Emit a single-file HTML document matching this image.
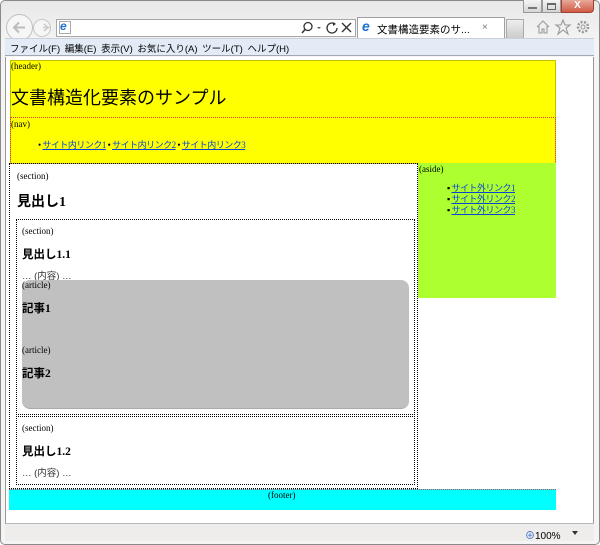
<!DOCTYPE html>
<html><head><meta charset="utf-8"><style>
*{margin:0;padding:0;box-sizing:border-box}
body{width:600px;height:545px;position:relative;overflow:hidden;background:#fff;font-family:"Liberation Serif","Noto Serif CJK SC",serif;font-size:10px;color:#000}
.a{position:absolute}
.ui{font-family:"Liberation Sans","Noto Sans CJK JP",sans-serif}
.s{font-size:9px}
h1{font-family:"Liberation Sans","Noto Sans CJK JP",sans-serif;font-weight:normal;font-size:18px}
h2{font-size:14px;font-weight:bold;font-family:"Liberation Serif","Noto Sans CJK JP",serif}
h3{font-size:11.5px;font-weight:bold;font-family:"Liberation Serif","Noto Sans CJK JP",serif}
a{color:#0645d8;text-decoration:underline}
.lnk{font-family:"Liberation Serif","Noto Sans CJK JP",serif;font-size:9px;letter-spacing:-0.5px}
</style></head><body>
<div class="a" style="left:0;top:0;width:600px;height:545px;background:linear-gradient(#e8e8e8,#f4f4f4 40px);border:1px solid #8a8a8a;border-radius:5px"></div>
<div class="a" style="left:523px;top:0;width:19px;height:13px;background:linear-gradient(#f4f4f4,#d4d4d4);border:1px solid #999;border-top:none"></div>
<div class="a" style="left:528px;top:7px;width:9px;height:2px;background:#777"></div>
<div class="a" style="left:542px;top:0;width:19px;height:13px;background:linear-gradient(#f4f4f4,#d4d4d4);border:1px solid #999;border-top:none"></div>
<div class="a" style="left:547px;top:3px;width:9px;height:7px;border:1px solid #666;border-top-width:2px"></div>
<div class="a" style="left:561px;top:0;width:33px;height:13px;background:linear-gradient(#e8a898,#d05a44);border:1px solid #a04030;border-top:none;border-radius:0 0 4px 0;color:#fff;font:bold 10px 'Liberation Sans',sans-serif;text-align:center;line-height:12px">X</div>
<div class="a" style="left:6px;top:14px;width:27px;height:27px;border-radius:50%;border:1px solid #c0c0c0;background:#f6f6f6"></div>
<div class="a" style="left:33px;top:19px;width:18px;height:18px;border-radius:50%;border:1px solid #c8c8c8;background:#f6f6f6"></div>
<svg class="a" style="left:6px;top:14px" width="46" height="27"><path d="M19 13.5H8M13 8.5L8 13.5L13 18.5" stroke="#bbb" stroke-width="2" fill="none"/><path d="M37 13.5H45" stroke="#ccc" stroke-width="1.5"/><path d="M38 10L42 13.5L38 17" stroke="#ccc" stroke-width="1.5" fill="none"/></svg>
<div class="a" style="left:56px;top:19px;width:300px;height:18px;background:#fff;border:1px solid #a8a8a8"></div>
<div class="a" style="left:59px;top:21px;width:12px;height:13px;border:1px solid #aaa;background:#fff"></div>
<div class="a ui" style="left:60px;top:19px;color:#1a73d0;font-size:12px;font-weight:bold;font-style:italic">e</div>
<svg class="a" style="left:300px;top:21px" width="55" height="14"><circle cx="8" cy="5.5" r="4" stroke="#333" stroke-width="1.3" fill="none"/><path d="M5 8.5L2 12" stroke="#333" stroke-width="1.5"/><path d="M17 6l2 2 2-2z" fill="#555"/><path d="M35 3A5 5 0 1 0 37 7" stroke="#333" stroke-width="1.3" fill="none"/><path d="M33 1l3 2-3 2z" fill="#333"/><path d="M42 2l9 9M51 2l-9 9" stroke="#333" stroke-width="1.4"/></svg>
<div class="a" style="left:357px;top:17px;width:148px;height:21px;background:#fff;border:1px solid #a0a0a0;border-bottom:none"></div>
<div class="a ui" style="left:362px;top:18px;color:#1a73d0;font-size:14px;font-weight:bold;font-style:italic">e</div>
<div class="a ui" style="left:377px;top:22px;font-size:10.5px;white-space:nowrap">文書構造要素のサ...</div>
<div class="a ui" style="left:482px;top:22px;font-size:10px;color:#777">×</div>
<div class="a" style="left:506px;top:19px;width:18px;height:19px;background:linear-gradient(#eee,#ccc);border:1px solid #aaa;border-bottom:none"></div>
<svg class="a" style="left:535px;top:18px" width="58" height="18"><path d="M2 9L8 3L14 9M4 8v7h3v-4h2v4h3V8" stroke="#999" stroke-width="1.1" fill="none"/><path d="M28 2l2 5h5l-4 3 2 6-5-4-5 4 2-6-4-3h5z" stroke="#999" stroke-width="1.1" fill="none"/><circle cx="48" cy="9" r="5" stroke="#999" stroke-width="2.5" fill="none" stroke-dasharray="2 1.5"/><circle cx="48" cy="9" r="2" stroke="#999" fill="none"/></svg>
<div class="a" style="left:5px;top:38px;width:589px;height:18px;background:#e2ebf6;border-bottom:1px solid #a0a8b0;border-top:1px solid #c8d0d8"></div>
<div class="a ui" style="left:10px;top:41px;font-size:9.5px;white-space:nowrap;word-spacing:2px">ファイル(F) 編集(E) 表示(V) お気に入り(A) ツール(T) ヘルプ(H)</div>
<div class="a" style="left:5px;top:57px;width:589px;height:467px;background:#fff;border-left:1px solid #999;border-right:1px solid #999"></div>
<div class="a" style="left:5px;top:523px;width:589px;height:18px;background:#efedeb;border-top:1px solid #b8b8b8"></div>
<div class="a ui" style="left:525px;top:527px;font-size:10px"><span style="color:#2a6ac8">⊕</span>100%</div>
<div class="a" style="left:572px;top:531px;border:3px solid transparent;border-top:4px solid #333"></div>

<div class="a" style="left:10px;top:60px;width:546px;height:104px;background:#ff0;border:1px solid #c0c000"></div>
<div class="a s" style="left:11px;top:61px">(header)</div>
<h1 class="a" style="left:11px;top:84px">文書構造化要素のサンプル</h1>
<div class="a" style="left:10px;top:117px;width:546px;height:47px;border:1px dotted #e04040"></div>
<div class="a s" style="left:11px;top:119px">(nav)</div>
<div class="a lnk" style="left:38px;top:138px;white-space:nowrap">• <a>サイト内リンク1</a> • <a>サイト内リンク2</a> • <a>サイト内リンク3</a></div>

<div class="a" style="left:9px;top:163px;width:409px;height:326px;border:1px dotted #000"></div>
<div class="a s" style="left:17px;top:171px">(section)</div>
<h2 class="a" style="left:17px;top:191px">見出し1</h2>
<div class="a" style="left:16px;top:219px;width:399px;height:196px;border:1px dotted #000"></div>
<div class="a s" style="left:22px;top:226px">(section)</div>
<h3 class="a" style="left:22px;top:246px">見出し1.1</h3>
<div class="a ui" style="left:22px;top:268px;font-size:9.5px;color:#333">… (内容) …</div>
<div class="a" style="left:22px;top:280px;width:387px;height:129px;background:#c0c0c0;border-radius:8px;border-bottom:1px solid #aaa"></div>
<div class="a s" style="left:22px;top:280px">(article)</div>
<h3 class="a" style="left:22px;top:300px">記事1</h3>
<div class="a s" style="left:22px;top:345px">(article)</div>
<h3 class="a" style="left:22px;top:365px">記事2</h3>
<div class="a" style="left:16px;top:416px;width:399px;height:69px;border:1px dotted #000"></div>
<div class="a s" style="left:22px;top:423px">(section)</div>
<h3 class="a" style="left:22px;top:443px">見出し1.2</h3>
<div class="a ui" style="left:22px;top:465px;font-size:9.5px;color:#333">… (内容) …</div>

<div class="a" style="left:418px;top:163px;width:138px;height:135px;background:#adff2f"></div>
<div class="a s" style="left:419px;top:164px">(aside)</div>
<div class="a lnk" style="left:447px;top:183px;line-height:11px">▪ <a>サイト外リンク1</a><br>▪ <a>サイト外リンク2</a><br>▪ <a>サイト外リンク3</a></div>

<div class="a" style="left:9px;top:489px;width:547px;height:21px;background:#0ff;border-top:1px dotted #e04040"></div>
<div class="a s" style="left:268px;top:490px">(footer)</div>
</body></html>
